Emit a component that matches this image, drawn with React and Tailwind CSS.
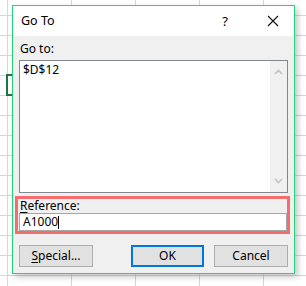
export default function App() {
  const font = { fontFamily: '"Noto Sans", "Open Sans", sans-serif' };
  return (
    <div
      className="relative w-[306px] h-[286px] overflow-hidden bg-white bg-[linear-gradient(to_right,#d6d6d6_1px,transparent_1px),linear-gradient(to_bottom,#d6d6d6_1px,transparent_1px)] bg-[size:64px_20px] bg-[position:7px_15px] text-[12px] text-black"
      style={font}
    >
      {/* selected cell outline */}
      <div className="absolute left-[6px] top-[74px] w-[24px] h-[22px] border-2 border-[#217346]" />

      {/* dialog */}
      <div className="absolute left-[12px] top-[5px] w-[283px] h-[269px] border border-[#22d47a] bg-[#f0f0f0] shadow-[3px_3px_6px_rgba(0,0,0,0.22)] flex flex-col">
        {/* title bar */}
        <div className="h-[30px] bg-white flex items-center pl-[8px] pr-[12px] shrink-0">
          <span className="text-[12.5px] leading-none">Go To</span>
          <span className="ml-auto mr-[39px] text-[13px] leading-none">?</span>
          <svg width="12" height="12" viewBox="0 0 12 12" className="mr-[3px]">
            <path d="M1 1 L11 11 M11 1 L1 11" stroke="#111" strokeWidth="1.1" />
          </svg>
        </div>

        {/* body */}
        <div className="flex-1 flex flex-col px-[6px] pt-[4px]">
          <div className="h-[20px] leading-[18px] pl-[1px]">Go to:</div>
          <div className="h-[133px] border border-[#828790] bg-white flex">
            <div className="flex-1 pl-[3px] pt-[1px] leading-[16px]">$D$12</div>
            <div className="w-[17px] bg-[#f0f0f0] flex flex-col items-center justify-between py-[8px]">
              <svg width="9" height="6" viewBox="0 0 9 6">
                <path d="M1 5 L4.5 1.5 L8 5" fill="none" stroke="#c2c2c2" strokeWidth="1.6" />
              </svg>
              <svg width="9" height="6" viewBox="0 0 9 6">
                <path d="M1 1 L4.5 4.5 L8 1" fill="none" stroke="#c2c2c2" strokeWidth="1.6" />
              </svg>
            </div>
          </div>

          {/* highlighted reference */}
          <div className="mt-[3px] -ml-[4px] -mr-[2px] border-[3px] border-[#f76c6c] pl-[1px] pr-0">
            <div className="h-[14px] leading-[13px] pl-[1px]">
              <span className="underline underline-offset-2">R</span>eference:
            </div>
            <div className="h-[18px] border border-[#a6a6a6] bg-white flex items-center pl-[3px]">
              <span className="leading-none">A1000</span>
              <span className="w-px h-[13px] bg-black" />
            </div>
          </div>

          {/* buttons */}
          <div className="mt-[11px] flex items-center">
            <button className="w-[74px] h-[22px] border border-[#adadad] bg-[#e1e1e1] leading-none">
              <span className="underline underline-offset-2">S</span>pecial...
            </button>
            <button className="ml-auto w-[73px] h-[22px] border-2 border-[#0078d7] bg-[#e1e1e1] leading-none">
              OK
            </button>
            <button className="ml-[10px] w-[74px] h-[22px] border border-[#adadad] bg-[#e1e1e1] leading-none">
              Cancel
            </button>
          </div>
        </div>
      </div>
    </div>
  );
}
